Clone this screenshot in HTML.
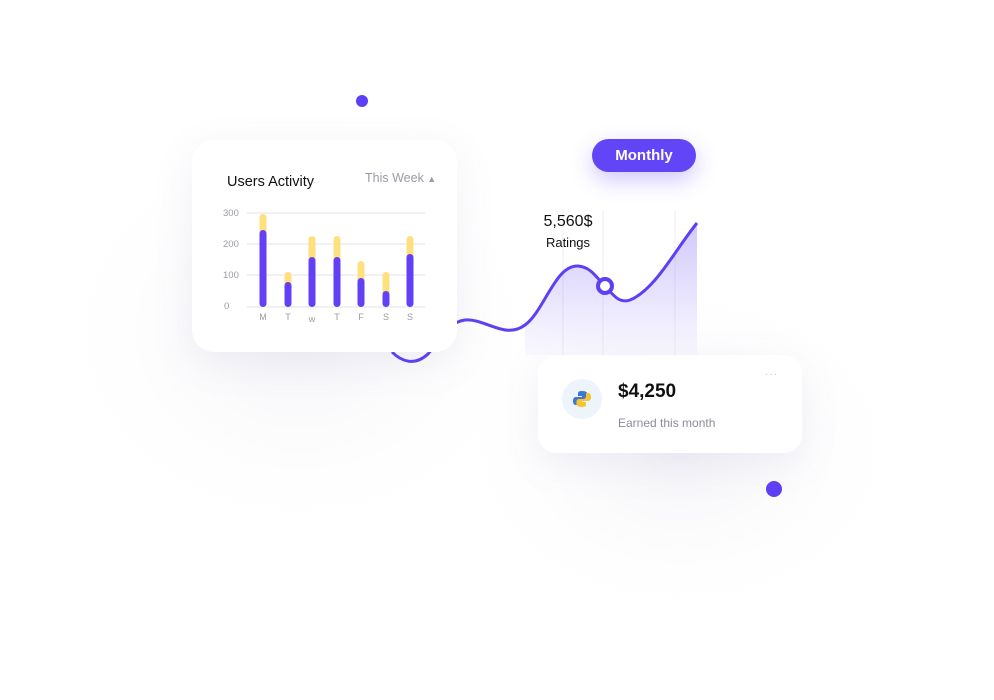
<!DOCTYPE html>
<html><head><style>
body{margin:0;width:994px;height:700px;background:#fff;position:relative;overflow:hidden;font-family:"Liberation Sans",sans-serif}
.card{position:absolute;background:#fff;border-radius:22px;box-shadow:0 10px 40px rgba(120,110,170,0.10)}
</style></head><body>
<svg width="994" height="700" style="position:absolute;left:0;top:0">
<defs>
<linearGradient id="g" x1="0" y1="0" x2="0" y2="1"><stop offset="0" stop-color="#7c63f5" stop-opacity="0.35"/><stop offset="1" stop-color="#7c63f5" stop-opacity="0.03"/></linearGradient>
<radialGradient id="bg" cx="0.5" cy="0.5" r="0.5"><stop offset="0" stop-color="#f3f3f7"/><stop offset="1" stop-color="#fff" stop-opacity="0"/></radialGradient>
</defs>
<ellipse cx="300" cy="330" rx="260" ry="220" fill="url(#bg)"/>
<ellipse cx="680" cy="450" rx="240" ry="180" fill="url(#bg)"/>
<g stroke="#f6f6f9" stroke-width="2"><line x1="563" y1="210" x2="563" y2="355"/><line x1="603" y1="210" x2="603" y2="355"/><line x1="675" y1="210" x2="675" y2="355"/></g>
<path d="M525,325 C545,310 555,265 578,266 C592,267 598,280 605,286 C612,293 618,304 630,300 C655,290 675,250 697,223 L697,355 L525,355 Z" fill="url(#g)"/>
<path d="M392,352 C402,362 415,366 428,354 C440,340 448,322 465,320 C485,318 505,340 525,325 C545,310 555,265 578,266 C592,267 598,280 605,286 C612,293 618,304 630,300 C655,290 675,250 697,223" fill="none" stroke="#5f3ff5" stroke-width="3"/>
<circle cx="605" cy="286" r="7" fill="#fff" stroke="#5f3ff5" stroke-width="4"/>
<circle cx="362" cy="101" r="6" fill="#5f3ff5"/>
<circle cx="774" cy="489" r="8" fill="#5f3ff5"/>
</svg>
<div style="position:absolute;left:592px;top:139px;width:104px;height:33px;border-radius:17px;background:#6245f7;color:#fff;font-weight:bold;font-size:15px;line-height:33px;text-align:center;box-shadow:0 8px 22px rgba(98,69,247,0.3)">Monthly</div>
<div style="position:absolute;left:530px;top:213px;width:76px;text-align:center;font-size:16px;color:#111">5,560$</div>
<div style="position:absolute;left:530px;top:235px;width:76px;text-align:center;font-size:13px;color:#111">Ratings</div>
<div class="card" style="left:192px;top:140px;width:265px;height:212px">
<div style="position:absolute;left:35px;top:34px;font-size:14.5px;color:#111">Users Activity</div>
<div style="position:absolute;left:173px;top:31px;font-size:12.5px;color:#9a9aa6">This Week <span style="font-size:9px">&#9650;</span></div>
<svg width="265" height="212" style="position:absolute;left:0;top:0">
<g stroke="#f0f0f5" stroke-width="2"><line x1="55" y1="73" x2="233" y2="73"/><line x1="55" y1="104" x2="233" y2="104"/><line x1="55" y1="135" x2="233" y2="135"/><line x1="55" y1="167" x2="233" y2="167"/></g>
<g font-size="9.5" fill="#9a9aa6" font-family="Liberation Sans"><text x="31" y="76">300</text><text x="31" y="107">200</text><text x="31" y="138">100</text><text x="32" y="169">0</text></g>
<g>
<rect x="67.5" y="74" width="7" height="93" rx="3.5" fill="#ffe07e"/><rect x="67.5" y="90" width="7" height="77" rx="3.5" fill="#6140f6"/>
<rect x="92.5" y="132" width="7" height="35" rx="3.5" fill="#ffe07e"/><rect x="92.5" y="142" width="7" height="25" rx="3.5" fill="#6140f6"/>
<rect x="116.5" y="96" width="7" height="71" rx="3.5" fill="#ffe07e"/><rect x="116.5" y="117" width="7" height="50" rx="3.5" fill="#6140f6"/>
<rect x="141.5" y="96" width="7" height="71" rx="3.5" fill="#ffe07e"/><rect x="141.5" y="117" width="7" height="50" rx="3.5" fill="#6140f6"/>
<rect x="165.5" y="121" width="7" height="46" rx="3.5" fill="#ffe07e"/><rect x="165.5" y="138" width="7" height="29" rx="3.5" fill="#6140f6"/>
<rect x="190.5" y="132" width="7" height="35" rx="3.5" fill="#ffe07e"/><rect x="190.5" y="151" width="7" height="16" rx="3.5" fill="#6140f6"/>
<rect x="214.5" y="96" width="7" height="71" rx="3.5" fill="#ffe07e"/><rect x="214.5" y="114" width="7" height="53" rx="3.5" fill="#6140f6"/>
</g>
<g font-size="9" fill="#9a9aa6" font-family="Liberation Sans" text-anchor="middle"><text x="71" y="180">M</text><text x="96" y="180">T</text><text x="120" y="182">w</text><text x="145" y="180">T</text><text x="169" y="180">F</text><text x="194" y="180">S</text><text x="218" y="180">S</text></g>
</svg>
</div>
<div class="card" style="left:538px;top:355px;width:264px;height:98px;border-radius:18px">
<div style="position:absolute;left:24px;top:24px;width:40px;height:40px;border-radius:50%;background:#edf4fc"></div>
<svg width="20" height="20" style="position:absolute;left:34px;top:34px" viewBox="0 0 20 20"><path d="M10 2c-4 0-4 1.5-4 3v2h4v1H4c-2 0-3 1.5-3 4s1 4 3 4h2v-3c0-1.5 1-3 3-3h4c1.5 0 2.5-1 2.5-2.5V5c0-1.5-1.5-3-5.5-3z" fill="#3b77d6"/><path d="M10 18c4 0 4-1.5 4-3v-2h-4v-1h6c2 0 3-1.5 3-4s-1-4-3-4h-2v3c0 1.5-1 3-3 3H7c-1.5 0-2.5 1-2.5 2.5V15c0 1.5 1.5 3 5.5 3z" fill="#f7c235"/></svg>
<div style="position:absolute;left:80px;top:26px;font-size:19px;font-weight:bold;color:#111">$4,250</div>
<div style="position:absolute;left:80px;top:61px;font-size:12px;color:#8c8c98">Earned this month</div>
<div style="position:absolute;left:227px;top:14px;font-size:10px;color:#c0c0c8;letter-spacing:1px">···</div>
</div>
</body></html>
